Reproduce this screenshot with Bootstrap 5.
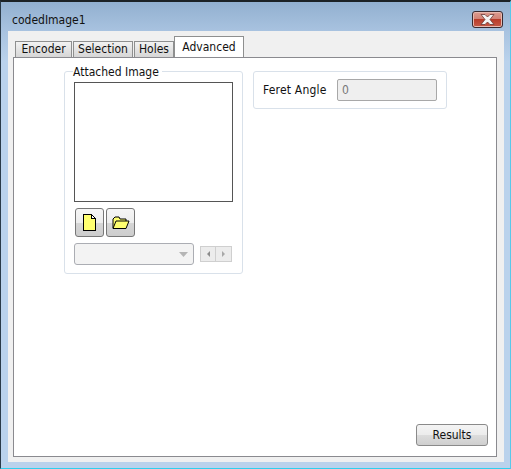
<!DOCTYPE html>
<html><head><meta charset="utf-8">
<link href="https://cdn.jsdelivr.net/npm/bootstrap@5.3.0/dist/css/bootstrap.min.css" rel="stylesheet">
<style>
html,body{margin:0;height:469px;overflow:hidden;background:#b9d1ea}
body{font-family:"DejaVu Sans Condensed","DejaVu Sans",sans-serif;font-stretch:condensed;font-size:12px;color:#111}
.win{width:511px;height:469px;border-top:2px solid #1c2226;border-left:1px solid #2a3a48;border-right:1px solid #58c8ea;border-bottom:1px solid #2fd0ee;background:linear-gradient(#92b0d0 0,#a9c3e0 30px,#bad2ec 60px,#bad2ec 100%);padding:0 6px 5px 7px}
.ttl{height:29px;padding-left:4px;line-height:36px}
.closer{width:31px;height:17px;margin-top:9px;margin-right:1px;border:1px solid #3a2a30;border-radius:3px;background:linear-gradient(#dc9b90 0,#d28376 45%,#b93c2a 50%,#c65a48 100%);box-shadow:inset 0 0 0 1px #e6b9b0}
.panel{height:431px;background:#f0f0f0;padding:5px 7px 5px 5px}
.tabsrow{height:21px;padding-left:2px}
.tb{height:16px;margin-top:5px;margin-right:1px;border:1px solid #8e8f8f;border-bottom:0;background:linear-gradient(#f2f2f2,#d6d6d6);line-height:15px;text-align:center;white-space:nowrap}
.tb.w1{width:57px}.tb.w2{width:60px}.tb.w3{width:40px;margin-right:0}
.tb.on{width:70px;height:21px;margin-top:0;background:#fff;line-height:20px;position:relative;margin-bottom:-1px;z-index:1}
.pane{height:400px;background:#fff;border:1px solid #8a8a8f;padding:13px 8px 10px 50px}
.gbox{border:1px solid #d9e1ea;border-radius:3px}
.att{width:179px;height:203px;padding:10px 9px 0 9px}
.cap{display:block;width:max-content;background:#fff;margin:-17px 0 0 -1px;padding:0 3px 0 0;height:17px;line-height:14px}
.imgbox{width:159px;height:120px;border:1px solid #555;margin-bottom:6px;background:#fff}
.ibrow{padding-left:1px;gap:2px}
.ib{width:29px;height:29px;padding:0;border:1px solid #777;border-radius:3px;background:linear-gradient(#f6f6f6 0,#ededed 50%,#d6d6d6 52%,#cdcdcd 100%);display:flex;align-items:center;justify-content:center}
.cmb{width:120px;height:22px;border:1px solid #abadb3;border-radius:3px;background:#f3f3f3;margin-top:6px;padding-right:5px}
.spin{width:32px;height:16px;margin-right:1px;margin-top:9px}
.spb{width:16px;height:16px;border:1px solid #cfcfcf;background:#ececec;display:flex;align-items:center;justify-content:center}
.spb.nxt{border-left:0}
.fer{width:194px;height:38px;margin-left:10px;padding:0 9px}
.ferlab{white-space:nowrap;width:64px;letter-spacing:.2px}
.ferin{width:100px;height:22px;border:1px solid #a8a8a8;border-radius:2px;background:#efefef;color:#777;padding-left:4px;line-height:20px;margin-left:10px}
.res{width:72px;height:22px;border:1px solid #8a8a8a;border-radius:3px;background:linear-gradient(#f4f4f4 0,#ececec 50%,#dcdcdc 52%,#cfcfcf 100%);padding:0;font-size:12px;color:#111;line-height:20px}
</style></head>
<body>
<div class="win d-flex flex-column">
  <div class="ttl d-flex justify-content-between align-items-start">
    <span>codedImage1</span>
    <div class="closer d-flex align-items-center justify-content-center">
      <svg width="15" height="11" viewBox="0 0 15 11"><path d="M1 .5h4l2.500 2.500 2.500-2.500h4L10 5.500l4 5h-4L7.500 8 5 10.500H1l4-5z" fill="#f4f4f4" stroke="#6b3a36" stroke-width=".8"/></svg>
    </div>
  </div>
  <div class="panel">
    <div class="tabsrow d-flex align-items-start">
      <div class="tb w1">Encoder</div><div class="tb w2">Selection</div><div class="tb w3">Holes</div><div class="tb on">Advanced</div>
    </div>
    <div class="pane d-flex flex-column justify-content-between">
      <div class="d-flex align-items-start">
        <div class="gbox att">
          <span class="cap">Attached Image</span>
          <div class="imgbox"></div>
          <div class="d-flex ibrow">
            <button class="ib" type="button" aria-label="New">
              <svg width="13" height="17" viewBox="0 0 13 17" shape-rendering="crispEdges"><path d="M.5.5h8l4 4v12H.500z" fill="#ffff70" stroke="#000"/><path d="M8.500.5v4h4z" fill="#fff" stroke="#000"/></svg>
            </button>
            <button class="ib" type="button" aria-label="Open">
              <svg width="18" height="13" viewBox="0 0 18 13"><path d="M1 12V3l2-2h4l1 2h6v2" fill="#ffff70" stroke="#000"/><path d="M1 12.500l3-7.500h13l-3 7.500z" fill="#ffff70" stroke="#000"/></svg>
            </button>
          </div>
          <div class="d-flex justify-content-between align-items-start">
            <div class="cmb d-flex align-items-center justify-content-end">
              <svg width="9" height="5" viewBox="0 0 9 5"><path d="M0 0h9L4.500 5z" fill="#b5b5b5"/></svg>
            </div>
            <div class="spin d-flex">
              <div class="spb"><svg width="3" height="6" viewBox="0 0 3 6"><path d="M3 0v6L0 3z" fill="#8c8c8c"/></svg></div>
              <div class="spb nxt"><svg width="3" height="6" viewBox="0 0 3 6"><path d="M0 0v6l3-3z" fill="#a8a8a8"/></svg></div>
            </div>
          </div>
        </div>
        <div class="gbox fer d-flex align-items-center">
          <span class="ferlab">Feret Angle</span>
          <div class="ferin">0</div>
        </div>
      </div>
      <div class="d-flex justify-content-end">
        <button class="res" type="button">Results</button>
      </div>
    </div>
  </div>
</div>
</body></html>
